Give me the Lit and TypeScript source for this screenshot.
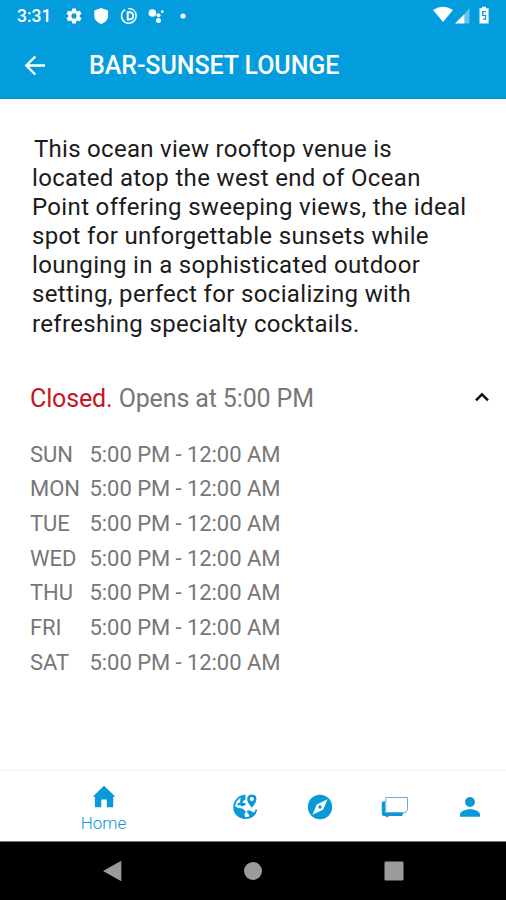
import { LitElement, html, css, svg } from "lit";
import { customElement } from "lit/decorators.js";

const DESCRIPTION = [
  "This ocean view rooftop venue is",
  "located atop the west end of Ocean",
  "Point offering sweeping views, the ideal",
  "spot for unforgettable sunsets while",
  "lounging in a sophisticated outdoor",
  "setting, perfect for socializing with",
  "refreshing specialty cocktails.",
];
const DAYS = ["SUN", "MON", "TUE", "WED", "THU", "FRI", "SAT"];
const HOURS = "5:00 PM - 12:00 AM";

const gear = svg`<path fill="currentColor" d="M19.43 12.98c.04-.32.07-.64.07-.98s-.03-.66-.07-.98l2.11-1.65c.19-.15.24-.42.12-.64l-2-3.46c-.12-.22-.39-.3-.61-.22l-2.49 1c-.52-.4-1.08-.73-1.69-.98l-.38-2.65C14.46 2.18 14.25 2 14 2h-4c-.25 0-.46.18-.49.42l-.38 2.65c-.61.25-1.17.59-1.69.98l-2.49-1c-.23-.09-.49 0-.61.22l-2 3.46c-.13.22-.07.49.12.64l2.11 1.65c-.04.32-.07.65-.07.98s.03.66.07.98l-2.11 1.65c-.19.15-.24.42-.12.64l2 3.46c.12.22.39.3.61.22l2.49-1c.52.4 1.08.73 1.69.98l.38 2.65c.03.24.24.42.49.42h4c.25 0 .46-.18.49-.42l.38-2.65c.61-.25 1.17-.59 1.69-.98l2.49 1c.23.09.49 0 .61-.22l2-3.46c.12-.22.07-.49-.12-.64l-2.11-1.65zM12 15.500c-1.930 0-3.500-1.570-3.500-3.500s1.570-3.500 3.500-3.500 3.500 1.570 3.500 3.500-1.570 3.500-3.500 3.500z"/>`;

@customElement("app-root")
export class AppRoot extends LitElement {
  static styles = css`
    :host {
      display: flex;
      flex-direction: column;
      width: 506px;
      height: 900px;
      overflow: hidden;
      background: #fff;
      font-family: Roboto, "Liberation Sans", sans-serif;
      color: #1b1b1b;
    }
    svg { display: block; flex: none; }
    .header {
      box-sizing: border-box;
      height: 99px;
      flex: none;
      background: #039cdc;
      border-bottom: 1px solid #1688c4;
      color: #fff;
    }
    .status {
      display: flex;
      align-items: center;
      height: 32px;
      padding: 0 15px 0 17px;
    }
    .clock {
      width: 49px;
      font-size: 17.5px;
      font-weight: 500;
      line-height: 32px;
    }
    .notices { display: flex; align-items: center; flex: 1; padding-bottom: 1px; }
    .shield { margin-left: 11px; }
    .disc { margin-left: 11px; }
    .assistant { margin-left: 10px; }
    .dot { margin-left: 16px; }
    .bar { display: flex; align-items: center; height: 67px; padding-left: 24px; }
    .title {
      margin: 1px 0 0 43px;
      font-size: 25px;
      font-weight: 500;
      line-height: 30px;
      letter-spacing: -0.06px;
      white-space: nowrap;
    }
    .content { flex: 1; padding: 36px 16px 0 30px; }
    .description {
      margin: 0 0 0 2px;
      font-size: 24px;
      line-height: 29.1px;
      letter-spacing: 0.34px;
      white-space: nowrap;
    }
    .line { display: block; }
    .line:first-child { padding-left: 2px; letter-spacing: 0.28px; }
    .summary {
      display: flex;
      align-items: center;
      justify-content: space-between;
      height: 36px;
      margin-top: 42px;
      font-size: 25px;
      letter-spacing: -0.13px;
      color: #777;
      white-space: nowrap;
    }
    .closed { color: #c4161c; }
    .chevron { margin-bottom: 3px; }
    .hours {
      display: grid;
      grid-template-columns: 59.5px auto;
      grid-auto-rows: 34.7px;
      align-items: center;
      margin-top: 20px;
      font-size: 22px;
      letter-spacing: -0.05px;
      color: #777;
      white-space: nowrap;
    }
    .tabs {
      box-sizing: border-box;
      display: flex;
      align-items: center;
      height: 71px;
      flex: none;
      padding-top: 1px;
      border-top: 1px solid #f3f3f3;
      color: #0899d9;
    }
    .tab { display: flex; flex-direction: column; align-items: center; width: 75px; flex: none; }
    .tab.active { width: 207px; padding-top: 4px; }
    .label { font-size: 17px; line-height: 20px; margin-top: 5px; font-weight: 300; }
    .system {
      box-sizing: border-box;
      display: flex;
      align-items: center;
      justify-content: space-between;
      height: 59px;
      flex: none;
      padding: 0 102px;
      border-top: 1px solid #777;
      background: #000;
      color: #9b9b9b;
    }
  `;

  render() {
    return html`
      <header class="header">
        <div class="status">
          <span class="clock">3:31</span>
          <div class="notices">
            <svg width="16" height="18" viewBox="1.5 1.5 21 21">${gear}</svg>
            <svg class="shield" width="16" height="18" viewBox="0 0 16 18"><path fill="currentColor" d="M8.200 1l6.900 2.500v5.500c0 3.800-3.400 6.800-6.900 8-3.500-1.200-6.900-4.200-6.900-8V3.500z"/></svg>
            <svg class="disc" width="18" height="18" viewBox="0 0 18 18"><g fill="none" stroke="currentColor"><path stroke-width="1.500" d="M5 2.600a7.500 7.500 0 0 0-.2 12.500c4.600 2.700 11.300-.3 11.300-6.300 0-4.500-3.300-7.200-7.800-7.200"/><path stroke-width="1.900" d="M7.700 5.200v7.300h1.600c3 0 3.900-1.500 3.900-3.700s-1-3.600-3.900-3.600z"/></g></svg>
            <svg class="assistant" width="16" height="18" viewBox="0 0 16 18"><g fill="currentColor"><circle cx="4.400" cy="6" r="3.800"/><circle cx="10.500" cy="8.300" r="2"/><circle cx="10.500" cy="13.400" r="2.500"/><circle cx="14.300" cy="4.700" r="1.400"/></g></svg>
            <svg class="dot" width="6" height="6" viewBox="0 0 6 6"><circle cx="3" cy="3" r="2.600" fill="currentColor"/></svg>
          </div>
          <svg width="58" height="20" viewBox="0 0 58 20"><path fill="currentColor" d="M0 4Q10 -2.300 20 4L10 16z"/><path fill="currentColor" d="M22 17.500L31.500 8V17.500z"/><path fill="currentColor" opacity=".4" d="M31.500 8L36.500 2V17.500h-5z"/><path fill="currentColor" d="M46.500 2.300h2.500V.8h4v1.500h2.600v15.200h-9.100z"/><path d="M53 5.700h-3.400v3.700h2.900v3.800h-2.500" fill="none" stroke="#039cdc" stroke-width="1.300"/></svg>
        </div>
        <div class="bar">
          <svg width="22" height="22" viewBox="0 0 22 22"><path d="M21 10.500H2.800M11.300 1.500L2.300 10.500l9 9" fill="none" stroke="currentColor" stroke-width="2.400"/></svg>
          <h1 class="title">BAR-SUNSET LOUNGE</h1>
        </div>
      </header>
      <main class="content">
        <p class="description">${DESCRIPTION.map((line) => html`<span class="line">${line}</span>`)}</p>
        <div class="summary">
          <span><span class="closed">Closed.</span> Opens at 5:00 PM</span>
          <svg class="chevron" width="16" height="12" viewBox="0 0 16 12"><path d="M2 9.300l6-6 6 6" fill="none" stroke="#111" stroke-width="2.500"/></svg>
        </div>
        <div class="hours">${DAYS.map((day) => html`<span>${day}</span><span>${HOURS}</span>`)}</div>
      </main>
      <nav class="tabs">
        <div class="tab active">
          <svg width="24" height="23" viewBox="0 0 24 23"><path fill="currentColor" d="M12 .8L23.400 11.700h-2.200v10.600h-6.400v-7.800H9.300v7.800H2.900V11.700H.7z"/></svg>
          <span class="label">Home</span>
        </div>
        <div class="tab">
          <svg width="28" height="28" viewBox="0 0 28 28"><path d="M14.500 2.500A11.300 11.300 0 1 0 25.500 16.500" fill="none" stroke="currentColor" stroke-width="1.700"/><path fill="currentColor" d="M3 12.500l4 2.500 4.500.5 3.500 3-1.500 3 1 4c-6 .5-11-4-12-9zM9.500 4.200l5-1.700v4.300l-2 .8-1 2.400h3v2l-3.500 1.500-2-1.500-3 .5 1-2.500 2.200-.5zM16.500 17l3 .8 3 1.700 2.700.5c-1.500 2.800-3.500 4.400-6.700 5.300l-.5-3.800-2-2z"/><path fill="currentColor" stroke="#fff" stroke-width="1.200" d="M20.800 .8c3 0 5.300 2.200 5.300 5.200 0 3.700-5.300 9.700-5.300 9.700S15.500 9.700 15.500 6c0-3 2.300-5.200 5.300-5.200z"/><circle cx="20.800" cy="6" r="2.100" fill="#fff"/></svg>
        </div>
        <div class="tab">
          <svg width="26" height="26" viewBox="0 0 26 26"><circle cx="13" cy="13" r="12.200" fill="currentColor"/><path fill="#fff" d="M20.500 5.300l-4.300 10.200L5.500 20.700l4.300-10.200z"/><circle cx="13" cy="13" r="1.700" fill="currentColor"/></svg>
        </div>
        <div class="tab">
          <svg width="28" height="22" viewBox="0 0 28 22"><path fill="currentColor" d="M.8 6l3.200-1v11.500h18.500L21 20H8l-2 1.500L4.500 20H2.200L.8 18.500z"/><path d="M4.800 1.500h21.700V14l-1.500 1-1 2-3-.5H4.800z" fill="#fff" stroke="#72a9d2" stroke-width="1"/></svg>
        </div>
        <div class="tab">
          <svg width="22" height="22" viewBox="0 0 22 22"><circle cx="11" cy="6" r="4.900" fill="currentColor"/><path fill="currentColor" d="M1 20.800v-2.300c0-3.500 6.500-5.200 10-5.200s10 1.700 10 5.200v2.300z"/></svg>
        </div>
      </nav>
      <footer class="system">
        <svg width="20" height="22" viewBox="0 0 20 22"><path fill="currentColor" d="M19.300 .8v20.400L1 11z"/></svg>
        <svg width="18" height="18" viewBox="0 0 18 18"><circle cx="9" cy="9" r="9" fill="currentColor"/></svg>
        <svg width="20" height="20" viewBox="0 0 20 20"><rect x=".5" y=".5" width="19" height="19" rx="1.200" fill="currentColor"/></svg>
      </footer>
    `;
  }
}
